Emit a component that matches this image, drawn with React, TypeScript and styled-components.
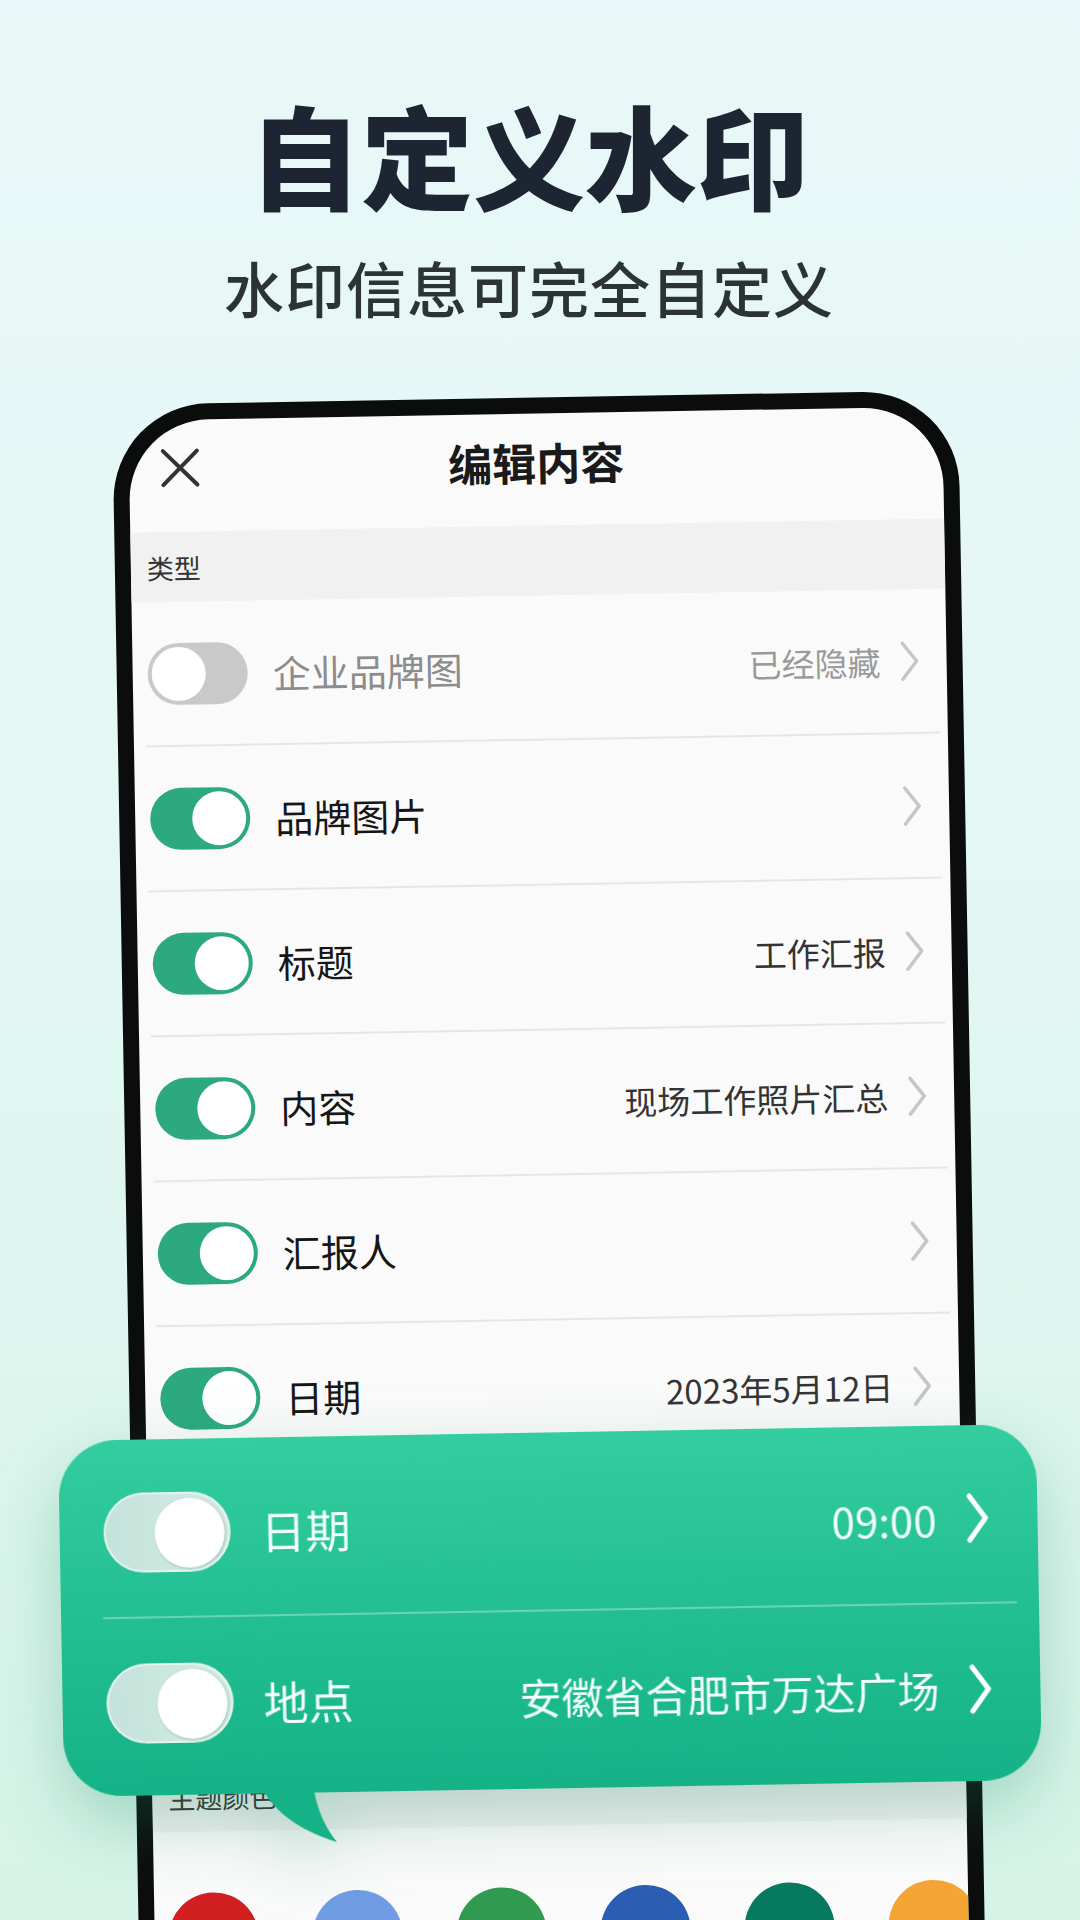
import React from 'react';
import styled, { createGlobalStyle } from 'styled-components';

const GlobalStyle = createGlobalStyle`
  html, body {
    margin: 0;
    padding: 0;
  }
  body {
    font-family: "Noto Sans CJK SC", "Noto Sans", sans-serif;
    background: #e4f7f3;
  }
`;

const FONT = `"Noto Sans CJK SC", "Noto Sans", sans-serif`;

interface Item {
  label: string;
  value: string;
  on: boolean;
}

// rows shown above the popup; the next two rows sit under it
const items: Item[] = [
  { label: '企业品牌图', value: '已经隐藏', on: false },
  { label: '品牌图片', value: '', on: true },
  { label: '标题', value: '工作汇报', on: true },
  { label: '内容', value: '现场工作照片汇总', on: true },
  { label: '汇报人', value: '', on: true },
  { label: '日期', value: '2023年5月12日', on: true },
];

const swatches = ['#d21f1f', '#6f9ce4', '#2f9a50', '#2b5db3', '#067a5f', '#f4a533'];

const Page = styled.div`
  position: relative;
  width: 1080px;
  height: 1920px;
  overflow: hidden;
  background: linear-gradient(180deg, #e8f8f8 0%, #e3f7f4 45%, #d5f4e7 100%);
`;

const Hero = styled.div`
  display: flex;
  flex-direction: column;
  align-items: center;
  padding: 86px 22px 0 0;
`;

const Title = styled.h1`
  margin: 0;
  font-family: ${FONT};
  font-size: 112px;
  line-height: 1.2;
  font-weight: 900;
  color: #1e2532;
`;

const Subtitle = styled.h2`
  margin: 31px 0 0;
  font-family: ${FONT};
  font-size: 60px;
  line-height: 1.2;
  font-weight: 500;
  color: #2b3337;
  letter-spacing: 1px;
`;

const Stage = styled.div`
  position: relative;
  margin-top: 82px;
`;

const Phone = styled.div`
  width: 846px;
  height: 1580px;
  margin-left: 112px;
  box-sizing: border-box;
  padding: 16px 16px 0;
  background: #0b0d0d;
  border-radius: 96px 96px 0 0;
  transform: rotate(-1deg);
  transform-origin: top left;
`;

const Screen = styled.div`
  height: 100%;
  background: #fafafa;
  border-radius: 80px 80px 0 0;
  overflow: hidden;
`;

const Header = styled.div`
  position: relative;
  height: 112px;
  box-sizing: border-box;
  padding-bottom: 16px;
  display: flex;
  align-items: center;
  justify-content: center;
`;

const CloseIcon = styled.svg`
  position: absolute;
  left: 31px;
  top: 28px;
`;

const HeaderTitle = styled.div`
  font-size: 44px;
  font-weight: 600;
  color: #1a1a1a;
  line-height: 1;
`;

const Band = styled.div`
  height: 70px;
  display: flex;
  align-items: center;
  padding-left: 16px;
  background: #f1f1f1;
  font-size: 27px;
  color: #333;
`;

const Row = styled.div`
  height: 145px;
  box-sizing: border-box;
  margin: 0 8px 0 12px;
  padding: 0 19px 0 3px;
  display: flex;
  align-items: center;
  border-bottom: 2px solid #e6e6e6;
`;

const Covered = styled.div`
  height: 290px;
`;

const Toggle = styled.div<{ on: boolean }>`
  flex: none;
  width: 100px;
  height: 62px;
  box-sizing: border-box;
  border-radius: 31px;
  padding: 4px;
  display: flex;
  justify-content: ${({ on }) => (on ? 'flex-end' : 'flex-start')};
  background: ${({ on }) => (on ? '#2ca97e' : '#c9c9c9')};
`;

const Knob = styled.div`
  width: 54px;
  height: 54px;
  border-radius: 50%;
  background: #fff;
`;

const Label = styled.div<{ on: boolean }>`
  margin-left: 25px;
  font-size: 38px;
  color: ${({ on }) => (on ? '#161616' : '#8c8c8c')};
  flex: 1;
`;

const Value = styled.div<{ on: boolean }>`
  font-size: 33px;
  color: ${({ on }) => (on ? '#333' : '#9a9a9a')};
  margin-right: 20px;
`;

const ColorRow = styled.div`
  display: flex;
  gap: 54px;
  padding: 61px 0 0 14px;
`;

const Swatch = styled.div<{ color: string }>`
  flex: none;
  width: 90px;
  height: 90px;
  border-radius: 50%;
  background: ${({ color }) => color};
`;

const Bubble = styled.div`
  position: absolute;
  left: 58px;
  top: 1036px;
  width: 978px;
  transform: rotate(-1deg);
  transform-origin: top left;
  filter: drop-shadow(0 26px 34px rgba(18, 130, 95, 0.28));
`;

const BubbleBody = styled.div`
  position: relative;
  z-index: 1;
  height: 356px;
  box-sizing: border-box;
  padding: 8px 0;
  border-radius: 58px;
  background: linear-gradient(180deg, #33cd9f 0%, #22bf92 50%, #15b287 100%);
`;

const BubbleRow = styled.div`
  height: 169px;
  display: flex;
  align-items: center;
  padding: 0 49px 0 44px;
`;

const BubbleDivider = styled.div`
  height: 2px;
  margin: 0 22px 0 42px;
  background: rgba(255, 255, 255, 0.32);
`;

const BubbleToggle = styled.div`
  flex: none;
  width: 127px;
  height: 80px;
  box-sizing: border-box;
  border-radius: 40px;
  padding: 4px;
  display: flex;
  justify-content: flex-end;
  background: linear-gradient(90deg, #c4e3da 0%, #d3ebe4 100%);
  border: 2px solid rgba(255, 255, 255, 0.55);
`;

const BubbleKnob = styled.div`
  width: 70px;
  height: 70px;
  border-radius: 50%;
  background: #fff;
  box-shadow: 1px 1px 3px rgba(0, 80, 60, 0.25);
`;

const BubbleLabel = styled.div`
  flex: 1;
  margin-left: 30px;
  font-size: 45px;
  color: #f1fffa;
`;

const BubbleValue = styled.div`
  font-size: 42px;
  color: #f1fffa;
  margin-right: 30px;
`;

const Tail = styled.svg`
  position: absolute;
  left: 180px;
  top: 336px;
`;

const Chevron: React.FC<{ light?: boolean }> = ({ light }) =>
  light ? (
    <svg width="22" height="50" viewBox="0 0 22 50">
      <polyline points="3,3 19,25 3,47" fill="none" stroke="#fff" strokeWidth="5" strokeLinecap="round" strokeLinejoin="round" />
    </svg>
  ) : (
    <svg width="19" height="40" viewBox="0 0 19 40">
      <polyline points="2,2 16,20 2,38" fill="none" stroke="#c6c6c6" strokeWidth="3.5" strokeLinecap="round" strokeLinejoin="round" />
    </svg>
  );

const App: React.FC = () => (
  <Page>
    <GlobalStyle />
    <Hero>
      <Title>自定义水印</Title>
      <Subtitle>水印信息可完全自定义</Subtitle>
    </Hero>
    <Stage>
      <Phone>
        <Screen>
          <Header>
            <CloseIcon width="40" height="40" viewBox="0 0 40 40">
              <path d="M3 3 L37 37 M37 3 L3 37" stroke="#333" strokeWidth="4" strokeLinecap="round" />
            </CloseIcon>
            <HeaderTitle>编辑内容</HeaderTitle>
          </Header>
          <Band>类型</Band>
          {items.map(it => (
            <Row key={it.label}>
              <Toggle on={it.on}><Knob /></Toggle>
              <Label on={it.on}>{it.label}</Label>
              {it.value && <Value on={it.on}>{it.value}</Value>}
              <Chevron />
            </Row>
          ))}
          <Covered />
          <Band>主题颜色</Band>
          <ColorRow>
            {swatches.map(c => <Swatch key={c} color={c} />)}
          </ColorRow>
        </Screen>
      </Phone>
      <Bubble>
        <BubbleBody>
          <BubbleRow>
            <BubbleToggle><BubbleKnob /></BubbleToggle>
            <BubbleLabel>日期</BubbleLabel>
            <BubbleValue>09:00</BubbleValue>
            <Chevron light />
          </BubbleRow>
          <BubbleDivider />
          <BubbleRow>
            <BubbleToggle><BubbleKnob /></BubbleToggle>
            <BubbleLabel>地点</BubbleLabel>
            <BubbleValue>安徽省合肥市万达广场</BubbleValue>
            <Chevron light />
          </BubbleRow>
        </BubbleBody>
        <Tail width="100" height="72" viewBox="0 0 100 72">
          <path d="M12 0 Q 26 48 92 70 Q 70 42 68 0 Z" fill="#15b287" />
        </Tail>
      </Bubble>
    </Stage>
  </Page>
);

export default App;
